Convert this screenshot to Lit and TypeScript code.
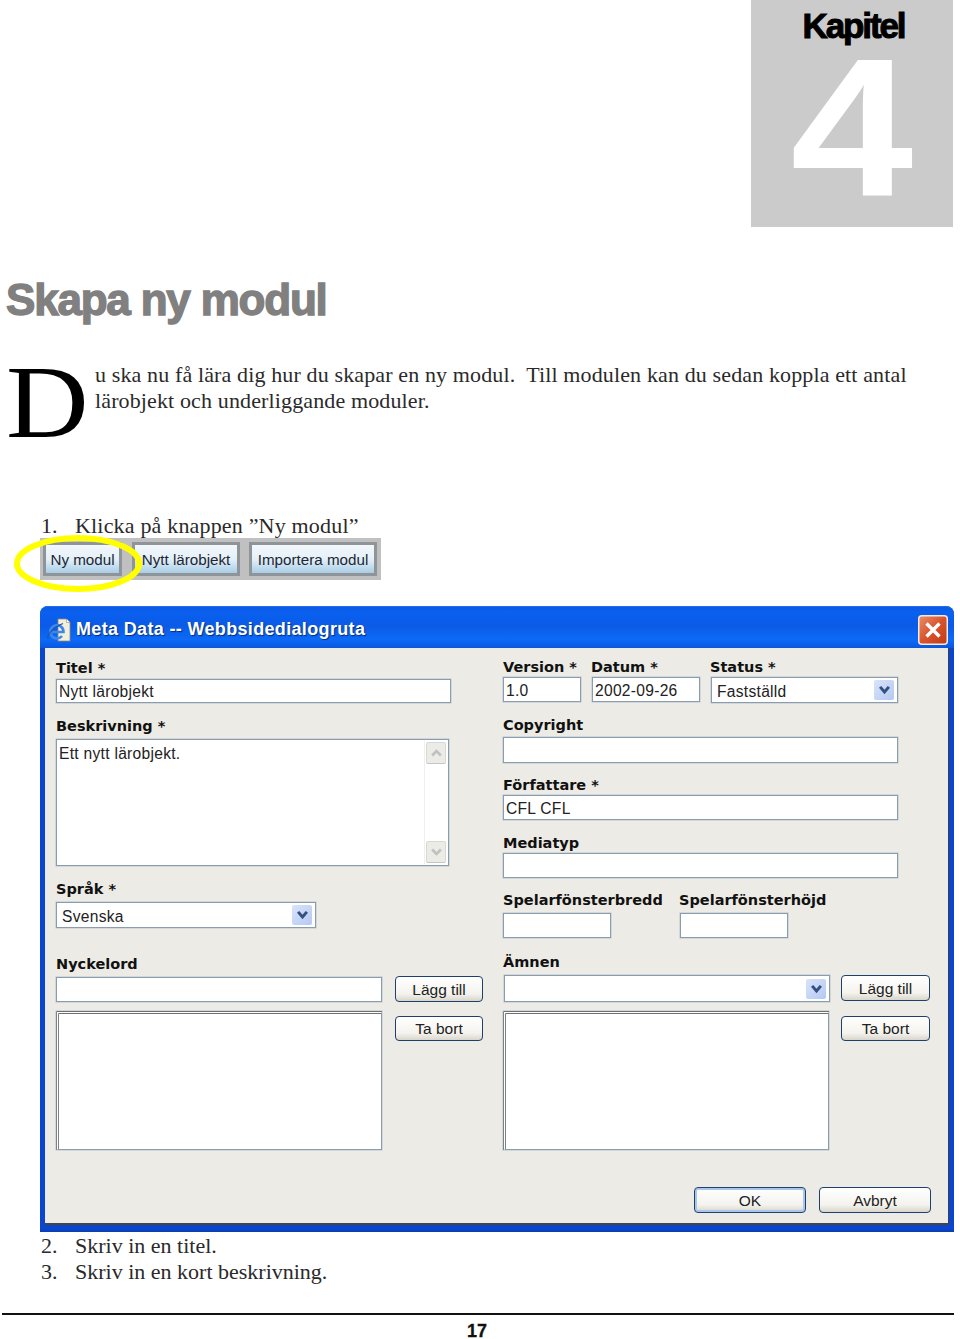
import { LitElement, html, css, svg } from "lit";
import { customElement } from "lit/decorators.js";

const chevron = svg`<svg class="chev" viewBox="0 0 10 8"><path d="M1.5 1.5 5 5.5 8.5 1.5" fill="none" stroke="#34507f" stroke-width="2.4"/></svg>`;

@customElement("app-root")
export class AppRoot extends LitElement {
  static styles = css`
    :host { display: block; width: 960px; height: 1339px; overflow: hidden; background: #fff; color: #111; font-family: "Liberation Serif", serif; }
    .top { display: flex; justify-content: flex-end; padding-right: 7px; }
    .chapter { width: 202px; height: 227px; background: #cbcbcb; display: flex; flex-direction: column; align-items: center; font-family: "Liberation Sans", sans-serif; font-weight: 700; }
    .kap { font-size: 35px; line-height: 40px; margin-top: 6px; margin-left: 3px; letter-spacing: -2.1px; color: #000; -webkit-text-stroke: 1px #000; }
    .num { font-size: 197px; line-height: 163px; margin-top: 1px; color: #fff; transform: scaleX(1.12); }
    h1 { margin: 47px 0 0 6px; font: 700 44px/52px "Liberation Sans", sans-serif; letter-spacing: -1.2px; color: #808080; -webkit-text-stroke: 1.4px #808080; }
    .intro { display: flex; margin: 36px 0 0 7px; height: 151px; }
    .cap { width: 89px; flex: none; font-size: 103px; line-height: 80px; margin-top: 0; margin-left: -1px; color: #000; transform: scaleX(1.11); transform-origin: left; }
    .intro p { margin: 0; font-size: 22px; line-height: 26px; white-space: pre; color: #2a2a2a; letter-spacing: .13px; }
    .step { display: flex; height: 26px; font-size: 22px; line-height: 26px; margin-left: 41px; color: #2a2a2a; }
    .step b { font-weight: 400; width: 34px; }
    .first span { letter-spacing: .18px; }
    .toolbar { position: relative; display: flex; margin: -1px 0 0 40px; width: 341px; height: 42px; box-sizing: border-box; padding: 4px 4px 4px 3px; background: #c0c0c0; font: 16px "Liberation Sans", sans-serif; }
    .tb { height: 34px; box-sizing: border-box; border: 3px solid #8f9499; background: linear-gradient(#f2f8fc, #e4f0f8 50%, #a9cde6); display: flex; align-items: center; justify-content: center; color: #1d2733; white-space: nowrap; font-size: 15.2px; }
    .tb1 { width: 79px; }
    .tb2 { width: 108px; margin-left: 10px; }
    .tb3 { width: 128px; margin-left: 9px; }
    .ring { position: absolute; left: -26px; top: -3px; width: 128px; height: 57px; }
    .dialog { margin: 26px 0 0 40px; width: 914px; height: 626px; box-sizing: border-box; display: flex; flex-direction: column; background: #0a45d0; border-radius: 8px 8px 0 0; font-family: "DejaVu Sans", sans-serif; border-bottom: 2px solid #0a3fb8; }
    .titlebar { height: 42px; flex: none; display: flex; align-items: center; padding: 4px 6px 0 7px; box-sizing: border-box; background: linear-gradient(#0c5ae0, #0a60f0 12%, #0b5be6 45%, #0c6af7 80%, #0a57dc); border-radius: 8px 8px 0 0; border-top: 1px solid #1c6fe8; }
    .ie { width: 24px; height: 25px; flex: none; margin-top: 2px; }
    .title { margin-left: 5px; color: #fff; font: 700 18px "Liberation Sans", sans-serif; letter-spacing: .34px; text-shadow: 1px 1px 1px #0a2c80; white-space: pre; flex: 1; }
    .close { width: 30px; height: 30px; flex: none; display: block; }
    .body { flex: 1; margin: 0 5px 5px; background: #ecebe5; border-right: 1px solid #3a3f46; border-bottom: 2px solid #444; display: flex; flex-direction: column; box-sizing: border-box; }
    .cols { display: flex; padding-left: 11px; }
    .left { width: 447px; padding-top: 10px; flex: none; }
    .right { padding-top: 9px; flex: none; }
    .lab { height: 18px; line-height: 20px; font-size: 14.5px; font-weight: 700; color: #111; white-space: pre; }
    .inp, .sel, .area, .list { box-sizing: border-box; background: #fff; border: 1px solid #8a9cb0; font: 15.6px/22px "Liberation Sans", sans-serif; letter-spacing: .28px; color: #222; padding-left: 2px; box-shadow: 0 0 0 .5px #b9c3cc; }
    .inp { display: flex; align-items: center; padding-top: 1px; }
    .h24 { height: 24px; } .h25 { height: 25px; padding-top: 3px; } .h26 { height: 26px; } .h27 { height: 27px; }
    .g2 { margin-top: 2px; } .g3 { margin-top: 3px; } .g4 { margin-top: 4px; } .g5 { margin-top: 5px; } .g9 { margin-top: 9px; }
    .g12 { margin-top: 12px; } .g13 { margin-top: 13px; } .g14 { margin-top: 14px; } .g26 { margin-top: 26px; }
    .w395 { width: 395px; } .w260 { width: 260px; } .w326 { width: 326px; } .w393 { width: 393px; } .w78 { width: 78px; } .w108 { width: 108px; } .w187 { width: 187px; }
    .sel { display: flex; align-items: center; justify-content: space-between; padding: 0 3px 0 5px; }
    .sel span { padding-top: 3px; }
    .drop { width: 20px; height: 20px; border-radius: 2px; background: linear-gradient(135deg, #d9e4fb, #b4c8f2); display: flex; align-items: center; justify-content: center; }
    .chev { width: 13px; height: 10px; }
    .area { height: 127px; position: relative; display: flex; justify-content: space-between; padding: 3px 1px 1px 2px; }
    .sb { width: 23px; flex: none; display: flex; flex-direction: column; justify-content: space-between; border-left: 1px solid #eef0ee; box-sizing: border-box; margin-top: -2px; padding: 1px 1px; }
    .sbb { height: 22px; border-radius: 2px; background: #ecebe5; border: 1px solid #d5d8d6; border-bottom-color: #c2c6c4; display: flex; align-items: center; justify-content: center; box-sizing: border-box; }
    .sbb svg { width: 13px; height: 10px; }
    .list { height: 139px; padding: 0; border-top: 3px double #6d7072; border-left: 3px double #7d8286; }
    .row { display: flex; align-items: flex-start; }
    .up1 { margin-top: -1px; }
    .btn { box-sizing: border-box; height: 26px; width: 88px; margin-left: 13px; padding-top: 1px; border: 1px solid #1f3f6d; border-radius: 4px; background: linear-gradient(#fff, #f4f3ee 70%, #d8d5cb); display: flex; align-items: center; justify-content: center; font: 15.5px "Liberation Sans", sans-serif; color: #222; }
    .btn.short { height: 25px; margin-top: 5px; }
    .b11 { margin-left: 11px; width: 89px; }
    .b12 { margin-left: 12px; width: 89px; }
    .multi { display: flex; }
    .mg { margin-left: 69px; }
    .dat { margin-left: 11px; }
    .sta { margin-left: 11px; }
    .ind { margin-left: 1px; }
    .lab-ver { width: 88px; } .lab-dat { width: 119px; } .lab-w { width: 176px; }
    .lab-row { display: flex; }
    .act { margin-top: auto; display: flex; justify-content: flex-end; padding: 0 17px 10px 0; }
    .act .btn { width: 112px; height: 26px; }
    .ok { box-shadow: inset 0 0 0 2px #a9c6ec; }
    .steps { margin: 1px 0 0 41px; }
    .steps .step { margin-left: 0; }
    hr { margin: 28px 6px 0 2px; height: 2px; border: 0; background: #111; }
    .page { margin: 9px 0 0 467px; font: 700 18px/15px "Liberation Sans", sans-serif; color: #111; -webkit-text-stroke: .3px #111; }
  `;

  private input(width: string, height: string, gap: string, text = "") {
    return html`<div class="inp ${width} ${height} ${gap}">${text}</div>`;
  }

  render() {
    const up = svg`<svg viewBox="0 0 10 8"><path d="M1.5 6 5 2.5 8.5 6" fill="none" stroke="#bcc2bf" stroke-width="2"/></svg>`;
    const down = svg`<svg viewBox="0 0 10 8"><path d="M1.5 2 5 5.5 8.5 2" fill="none" stroke="#bcc2bf" stroke-width="2"/></svg>`;
    return html`
      <div class="top">
        <div class="chapter"><div class="kap">Kapitel</div><div class="num">4</div></div>
      </div>
      <h1>Skapa ny modul</h1>
      <div class="intro">
        <div class="cap">D</div>
        <p>u ska nu få lära dig hur du skapar en ny modul.  Till modulen kan du sedan koppla ett antal
lärobjekt och underliggande moduler.</p>
      </div>
      <div class="step first"><b>1.</b><span>Klicka på knappen ”Ny modul”</span></div>
      <div class="toolbar">
        <div class="tb tb1">Ny modul</div>
        <div class="tb tb2">Nytt lärobjekt</div>
        <div class="tb tb3">Importera modul</div>
        <svg class="ring" viewBox="0 0 128 57"><ellipse cx="64" cy="28.5" rx="61" ry="25.5" fill="none" stroke="#ffff00" stroke-width="6"/></svg>
      </div>
      <div class="dialog">
        <div class="titlebar">
          <svg class="ie" viewBox="0 0 24 25">
            <path d="M11 1h8.5l3.5 3.5V23H11z" fill="#f3efdd" stroke="#8f8c78" stroke-width=".8"/>
            <path d="M19.5 1v3.5H23" fill="#fff" stroke="#8f8c78" stroke-width=".6"/>
            <path d="M4.5 14h12A6.6 6.6 0 1 0 15 18" fill="none" stroke="#3f86e6" stroke-width="2.6"/>
            <path d="M1 21c-1.500-3 5-12 15-15.500" fill="none" stroke="#1f55ad" stroke-width="1.2"/>
          </svg>
          <div class="title">Meta Data -- Webbsidedialogruta</div>
          <svg class="close" viewBox="0 0 30 30">
            <defs><linearGradient id="cg" x1="0" y1="0" x2="1" y2="1"><stop offset="0" stop-color="#e8906c"/><stop offset=".5" stop-color="#d9532c"/><stop offset="1" stop-color="#c03a18"/></linearGradient></defs>
            <rect x=".75" y=".75" width="28.5" height="28.5" rx="3" fill="url(#cg)" stroke="#f3ece6" stroke-width="1.5"/>
            <path d="M8.5 8.5 21.5 21.5M21.5 8.5 8.5 21.5" stroke="#fff" stroke-width="3.4"/>
          </svg>
        </div>
        <div class="body">
          <div class="cols">
            <div class="left">
              <div class="lab">Titel *</div>
              ${this.input("w395", "h24", "g3", "Nytt lärobjekt")}
              <div class="lab g13">Beskrivning *</div>
              <div class="area w393 g5"><span>Ett nytt lärobjekt.</span>
                <div class="sb"><div class="sbb">${up}</div><div class="sbb">${down}</div></div>
              </div>
              <div class="lab g13">Språk *</div>
              <div class="sel w260 h26 g5"><span>Svenska</span><div class="drop">${chevron}</div></div>
              <div class="lab g26">Nyckelord</div>
              <div class="row g5">
                <div class="inp w326 h25"></div>
                <div class="btn up1">Lägg till</div>
              </div>
              <div class="row g9">
                <div class="list w326"></div>
                <div class="btn short">Ta bort</div>
              </div>
            </div>
            <div class="right">
              <div class="lab-row">
                <div class="lab lab-ver">Version *</div>
                <div class="lab lab-dat">Datum *</div>
                <div class="lab">Status *</div>
              </div>
              <div class="multi g2">
                ${this.input("w78", "h25", "", "1.0")}
                <div class="inp w108 h25 dat">2002-09-26</div>
                <div class="sel w187 h26 sta"><span>Fastställd</span><div class="drop">${chevron}</div></div>
              </div>
              <div class="lab g12">Copyright</div>
              ${this.input("w395", "h26", "g4")}
              <div class="lab g12">Författare *</div>
              ${this.input("w395", "h25", "g2", "CFL CFL")}
              <div class="lab g13">Mediatyp</div>
              ${this.input("w395", "h25", "g2")}
              <div class="lab-row g12">
                <div class="lab lab-w">Spelarfönsterbredd</div>
                <div class="lab">Spelarfönsterhöjd</div>
              </div>
              <div class="multi g5">
                ${this.input("w108", "h25", "")}
                <div class="inp w108 h25 mg"></div>
              </div>
              <div class="lab g14">Ämnen</div>
              <div class="row g5">
                <div class="sel w326 h27 ind"><span></span><div class="drop">${chevron}</div></div>
                <div class="btn b11">Lägg till</div>
              </div>
              <div class="row g9">
                <div class="list w326"></div>
                <div class="btn short b12">Ta bort</div>
              </div>
            </div>
          </div>
          <div class="act">
            <div class="btn ok">OK</div>
            <div class="btn">Avbryt</div>
          </div>
        </div>
      </div>
      <div class="steps">
        <div class="step"><b>2.</b><span>Skriv in en titel.</span></div>
        <div class="step"><b>3.</b><span>Skriv in en kort beskrivning.</span></div>
      </div>
      <hr />
      <div class="page">17</div>
    `;
  }
}
